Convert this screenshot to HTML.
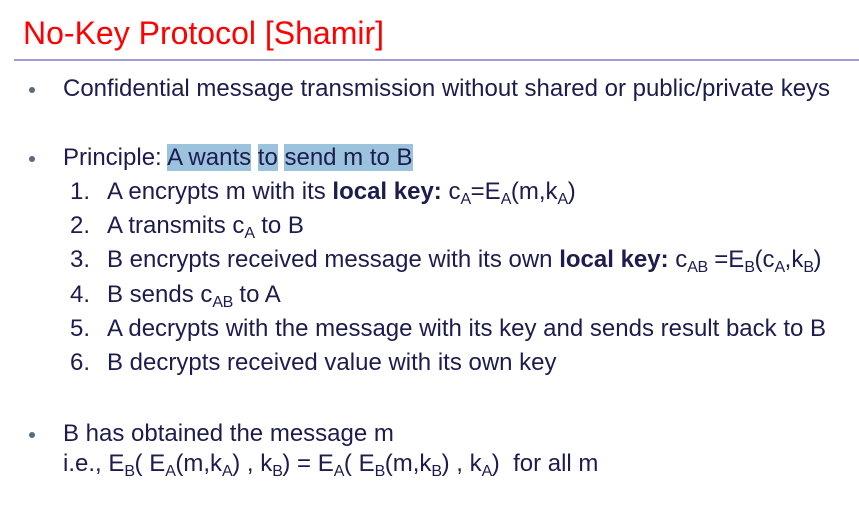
<!DOCTYPE html>
<html><head><style>
body{margin:0;width:859px;height:506px;background:#fff;position:relative;overflow:hidden;font-family:"Liberation Sans",sans-serif;color:#1c1c4e}
.t{position:absolute;left:23px;top:13px;font-size:32px;line-height:40px;color:#f00;white-space:nowrap}
.hr{position:absolute;left:14px;right:0;top:59px;height:2px;background:#a39dd3}
.l{position:absolute;font-size:24px;white-space:nowrap;line-height:26px}
.b{position:absolute;left:29px;width:6px;height:6px;border-radius:50%;background:#5a6a80}
sub{font-size:16px;vertical-align:-5px;line-height:0;letter-spacing:-0.5px}
.h{background:#9cc3dd}
.n{position:absolute;left:70px}
.x{position:absolute;left:107px}
</style></head><body>
<div class="t">No-Key Protocol [Shamir]</div>
<div class="hr"></div>
<div class="b" style="top:87px"></div>
<div class="l" style="left:63px;top:76px">Confidential message transmission without shared or public/private keys</div>
<div class="b" style="top:156px"></div>
<div class="l" style="left:63px;top:145px">Principle: <span class="h">A wants</span> <span class="h">to</span> <span class="h">send m to B</span></div>
<div class="l" style="top:179px;left:0;width:859px"><span class="n">1.</span><span class="x">A encrypts m with its <b>local key:</b> c<sub>A</sub>=E<sub>A</sub>(m,k<sub>A</sub>)</span></div>
<div class="l" style="top:213px;left:0;width:859px"><span class="n">2.</span><span class="x">A transmits c<sub>A</sub> to B</span></div>
<div class="l" style="top:247px;left:0;width:859px"><span class="n">3.</span><span class="x">B encrypts received message with its own <b>local key:</b> c<sub>AB</sub> =E<sub>B</sub>(c<sub>A</sub>,k<sub>B</sub>)</span></div>
<div class="l" style="top:282px;left:0;width:859px"><span class="n">4.</span><span class="x">B sends c<sub>AB</sub> to A</span></div>
<div class="l" style="top:316px;left:0;width:859px"><span class="n">5.</span><span class="x">A decrypts with the message with its key and sends result back to B</span></div>
<div class="l" style="top:350px;left:0;width:859px"><span class="n">6.</span><span class="x">B decrypts received value with its own key</span></div>
<div class="b" style="top:432px"></div>
<div class="l" style="left:63px;top:421px">B has obtained the message m</div>
<div class="l" style="left:63px;top:451px">i.e., E<sub>B</sub>( E<sub>A</sub>(m,k<sub>A</sub>) , k<sub>B</sub>) = E<sub>A</sub>( E<sub>B</sub>(m,k<sub>B</sub>) , k<sub>A</sub>)&nbsp; for all m</div>
</body></html>
